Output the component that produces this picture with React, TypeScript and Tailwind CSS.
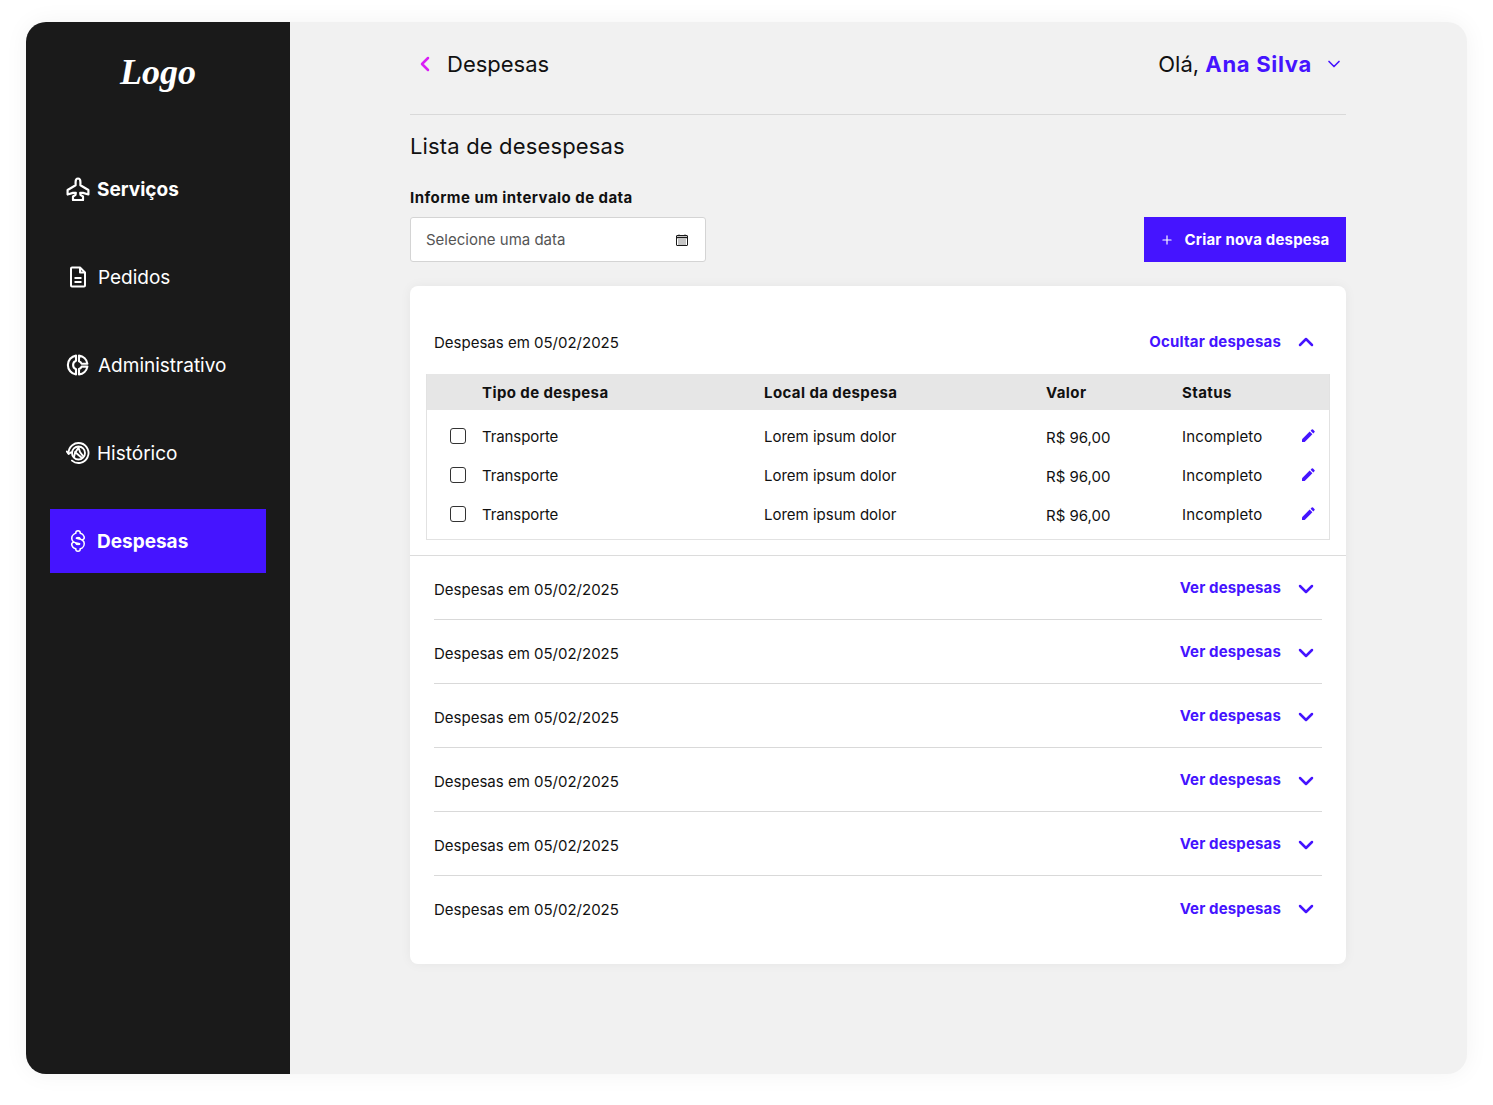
import { FC, ReactNode } from "react";
import { ChevronDown, ChevronLeft, ChevronUp, Plus } from "lucide-react";

const PlaneIcon = () => (
  <svg width="24" height="24" viewBox="0 0 24 24" fill="none" stroke="white" strokeWidth="2.2" strokeLinejoin="round">
    <path d="M12 1.500c1.400 0 2.400 1.600 2.400 3.500v3.200l8 4.800v4.500l-5.400-1.600h-2.800l.3 2 2.500 1.600v3.500H7v-3.500l2.500-1.600.3-2H7l-5.400 1.600V13l8-4.800V5c0-1.900 1-3.500 2.400-3.500z" />
  </svg>
);

const DocIcon = () => (
  <svg width="24" height="24" viewBox="0 0 24 24" fill="none" stroke="white" strokeWidth="2" strokeLinejoin="round">
    <path d="M5 3.500a1 1 0 0 1 1-1h8l5 5v13a1 1 0 0 1-1 1H6a1 1 0 0 1-1-1z" />
    <path d="M14 2.500v5h5M8.500 13h7M8.500 17h7" />
  </svg>
);

const ChartIcon = () => (
  <svg width="24" height="24" viewBox="0 0 24 24" fill="none" stroke="white" strokeWidth="2.1" strokeLinejoin="round">
    <path d="M10 2.600a9.500 9.500 0 0 0 0 18.800v-5.200a4.500 4.500 0 0 1 0-8.400z" />
    <path d="M13 2.600v5.600a4 4 0 0 1 2.600 2.600h5.800A9.500 9.500 0 0 0 13 2.600z" />
    <path d="M13 21.400v-5.400a4 4 0 0 0 2.600-2.400h5.800A9.500 9.500 0 0 1 13 21.400z" />
  </svg>
);

const HistoryIcon = () => (
  <svg width="24" height="24" viewBox="0 0 24 24" fill="none" stroke="white" strokeWidth="1.9" strokeLinecap="round" strokeLinejoin="round">
    <path d="M2.500 12A10 10 0 1 1 6 19.600" />
    <path d="M.8 10.500 2.600 13l2.600-1.800" />
    <circle cx="12.500" cy="12" r="6.500" />
    <path d="M12.500 6.500 9 12l-1 4M12.500 6.500 14 11l3 4M9 11l7 6" />
  </svg>
);

const DollarIcon = () => (
  <svg width="24" height="24" viewBox="0 0 24 24" fill="none" strokeLinecap="round" strokeLinejoin="round">
    <g stroke="white" strokeWidth="6">
      <path d="M16 8.500C15.500 7 14 6.200 12 6.200c-2.400 0-4 1.200-4 3 0 1.900 1.600 2.500 4 2.800s4 .9 4 2.800c0 1.800-1.600 3-4 3-2 0-3.500-.8-4-2.300" />
      <path d="M12 4v2M12 18v2" />
    </g>
    <g stroke="#4514ff" strokeWidth="3">
      <path d="M16 8.500C15.500 7 14 6.200 12 6.200c-2.400 0-4 1.200-4 3 0 1.900 1.600 2.500 4 2.800s4 .9 4 2.800c0 1.800-1.600 3-4 3-2 0-3.500-.8-4-2.300" />
      <path d="M12 4v2M12 18v2" />
    </g>
  </svg>
);

const CalendarIcon = () => (
  <svg width="12" height="12" viewBox="0 0 12 12" fill="none" stroke="#1a1a1a">
    <rect x="0.500" y="1.500" width="11" height="10" rx="0.500" />
    <path d="M0.500 3.500h11" strokeWidth="1.500" />
    <path d="M3 0.500v1.500M9 0.500v1.500M2.500 6h7M2.500 8h7M2.500 10h7" strokeDasharray="1 1" />
  </svg>
);

const PencilIcon = () => (
  <svg width="14" height="14" viewBox="0 0 14 14" fill="#4514ff">
    <path d="M1 10.300 8.700 2.600l2.700 2.700L3.700 13H1z" />
    <path d="M9.600 1.700 10.700.6a.9.9 0 0 1 1.300 0l1.400 1.400a.9.9 0 0 1 0 1.300l-1.100 1.100z" />
  </svg>
);

const NavItem: FC<{ icon: ReactNode; label: string; gap: string; bold?: boolean; active?: boolean }> = ({
  icon,
  label,
  gap,
  bold,
  active,
}) => (
  <div
    className={`flex h-16 items-center ${gap} pl-[16px] pr-[15px] text-[19px] text-white ${
      active ? "bg-[#4514ff] font-bold" : bold ? "font-bold" : "font-normal"
    }`}
  >
    {icon}
    <span className="pt-[2px]">{label}</span>
  </div>
);

const rows = [1, 2, 3];
const collapsed = [1, 2, 3, 4, 5, 6];

const App: FC = () => {
  return (
    <div className="h-[1105px] w-[1493px] bg-white pb-[31px] pl-[26px] pr-[26px] pt-[22px] font-['Inter',sans-serif] text-[#111]">
      <div className="flex h-[1052px] w-[1441px] overflow-hidden rounded-[20px] bg-[#f1f1f1] shadow-[0_0_24px_rgba(0,0,0,0.05)]">
        {/* Sidebar */}
        <aside className="w-[264px] shrink-0 bg-[#1a1a1a] pl-6 pr-6">
          <div className="flex h-[102px] justify-center pt-[26px]">
            <span className="font-['Liberation_Serif',serif] text-[36px] font-bold italic leading-[48px] text-white">Logo</span>
          </div>
          <nav className="mt-[33px] flex flex-col gap-6">
            <NavItem icon={<PlaneIcon />} label="Serviços" gap="gap-[7px]" bold />
            <NavItem icon={<DocIcon />} label="Pedidos" gap="gap-[8px]" />
            <NavItem icon={<ChartIcon />} label="Administrativo" gap="gap-[8px]" />
            <NavItem icon={<HistoryIcon />} label="Histórico" gap="gap-[7px]" />
            <NavItem icon={<DollarIcon />} label="Despesas" gap="gap-[7px]" active />
          </nav>
        </aside>

        {/* Main */}
        <main className="ml-[120px] w-[936px]">
          <header className="flex h-[93px] items-center justify-between border-b border-[#d9d9d9] pb-[9px]">
            <div className="flex items-center gap-[10px] pl-[3px]">
              <ChevronLeft size={24} strokeWidth={2.500} className="text-[#d91ff5]" />
              <span className="pt-[2px] text-[22px]">Despesas</span>
            </div>
            <div className="flex items-center text-[22px]">
              <span className="pt-[2px]">Olá,&nbsp;</span>
              <span className="pt-[2px] font-bold tracking-[0.7px] text-[#4514ff]">Ana Silva</span>
              <ChevronDown size={20} className="ml-[12px] text-[#4514ff]" />
              <span className="w-[2px]" />
            </div>
          </header>

          <h1 className="mt-[15px] text-[22px] font-normal leading-[32px] tracking-[0.15px]">Lista de desespesas</h1>
          <label className="mt-[26px] block text-[15px] font-bold leading-[20px] tracking-[0.45px]">Informe um intervalo de data</label>

          <div className="mt-[9px] flex items-center justify-between">
            <div className="flex h-[45px] w-[296px] items-center justify-between rounded-[3px] border border-[#d4d4d4] bg-white pl-[15px] pr-[17px] text-[15px] text-[#555]">
              <span className="pt-[2px]">Selecione uma data</span>
              <CalendarIcon />
            </div>
            <button className="flex h-[45px] w-[202px] items-center justify-center gap-[10px] bg-[#4514ff] text-[15px] font-bold tracking-[0.2px] text-white">
              <Plus size={14} />
              <span className="pt-[2px]">Criar nova despesa</span>
            </button>
          </div>

          {/* Card */}
          <section className="mt-6 rounded-[8px] bg-white pb-6 pt-6 shadow-[0_0_12px_rgba(0,0,0,0.05)]">
            <div className="flex h-[64px] items-center justify-between pl-6 pr-6">
              <span className="pt-[2px] text-[15px]">Despesas em 05/02/2025</span>
              <span className="flex items-center gap-[13px] text-[15px] font-bold tracking-[0.2px] text-[#4514ff]">
                Ocultar despesas
                <ChevronUp size={24} strokeWidth={2.500} className="mr-[4px]" />
              </span>
            </div>

            <div className="ml-4 mr-4 border border-t-0 border-[#e2e2e2]">
              <div className="grid h-9 grid-cols-[55px_282px_282px_136px_1fr] items-center bg-[#e6e6e6] pt-[2px] text-[15px] font-bold tracking-[0.4px]">
                <span />
                <span>Tipo de despesa</span>
                <span>Local da despesa</span>
                <span>Valor</span>
                <span>Status</span>
              </div>
              <div className="pb-[6px] pt-[6px]">
                {rows.map((r) => (
                  <div key={r} className="grid h-[39px] grid-cols-[55px_282px_282px_136px_1fr] items-center text-[15px]">
                    <span className="ml-[23px] mt-[1px] h-4 w-4 rounded-[3px] border border-[#333]" />
                    <span className="pt-[4px] tracking-[-0.1px]">Transporte</span>
                    <span className="pt-[4px]">Lorem ipsum dolor</span>
                    <span className="pt-[5px]">R$ 96,00</span>
                    <span className="flex items-center justify-between pr-[14px]">
                      <span className="pt-[4px] tracking-[0.15px]">Incompleto</span>
                      <PencilIcon />
                    </span>
                  </div>
                ))}
              </div>
            </div>

            <div className="mt-[15px] border-t border-[#dcdcdc]">
              {collapsed.map((c, i) => (
                <div
                  key={c}
                  className={`ml-6 mr-6 flex h-16 items-center justify-between pt-[2px] ${i < collapsed.length - 1 ? "border-b border-[#d9d9d9]" : ""}`}
                >
                  <span className="pt-[3px] text-[15px]">Despesas em 05/02/2025</span>
                  <span className="flex items-center gap-[13px] text-[15px] font-bold tracking-[0.15px] text-[#4514ff]">
                    Ver despesas
                    <ChevronDown size={24} strokeWidth={2.500} className="mr-[4px]" />
                  </span>
                </div>
              ))}
            </div>
          </section>
        </main>
      </div>
    </div>
  );
};

export default App;
